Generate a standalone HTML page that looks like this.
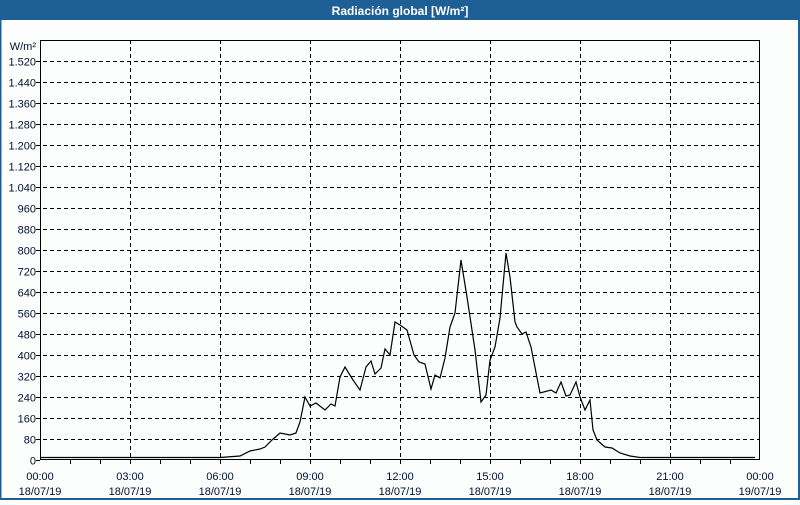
<!DOCTYPE html>
<html><head><meta charset="utf-8"><style>
html,body{margin:0;padding:0;background:#fff;}
body{width:800px;height:500px;overflow:hidden;}
</style></head><body>
<svg width="800" height="500" xmlns="http://www.w3.org/2000/svg" font-family="Liberation Sans, sans-serif">
<rect x="0" y="0" width="800" height="500" fill="#fcfdfd"/>
<rect x="0" y="0" width="800" height="20" fill="#1e5f96"/>
<rect x="0" y="0" width="1.5" height="500" fill="#1e5f96"/>
<rect x="798" y="0" width="2" height="500" fill="#1e5f96"/>
<rect x="0" y="498" width="800" height="2" fill="#1e5f96"/>
<text x="400" y="15" text-anchor="middle" fill="#fff" font-weight="bold" font-size="12">Radiación global [W/m²]</text>
<g stroke="#000" stroke-width="1" stroke-dasharray="4,3" fill="none">
<path d="M36 61.5H760M36 82.5H760M36 103.5H760M36 124.5H760M36 145.5H760M36 166.5H760M36 187.5H760M36 208.5H760M36 229.5H760M36 250.5H760M36 271.5H760M36 292.5H760M36 313.5H760M36 334.5H760M36 355.5H760M36 376.5H760M36 397.5H760M36 418.5H760M36 439.5H760"/>
<path d="M130.5 40V460M220.5 40V460M310.5 40V460M400.5 40V460M490.5 40V460M580.5 40V460M670.5 40V460"/>
</g>
<g stroke="#000" stroke-width="1" fill="none">
<rect x="40.5" y="40.5" width="719" height="419"/>
<path d="M36 460.5H40M70.5 460V464M100.5 460V464M130.5 460V464M160.5 460V464M190.5 460V464M220.5 460V464M250.5 460V464M280.5 460V464M310.5 460V464M340.5 460V464M370.5 460V464M400.5 460V464M430.5 460V464M460.5 460V464M490.5 460V464M520.5 460V464M550.5 460V464M580.5 460V464M610.5 460V464M640.5 460V464M670.5 460V464M700.5 460V464M730.5 460V464"/>
<polyline stroke-width="1.2" points="41,457.5 220,457.5 240,456 250,451 260,449 265,447 272,440 280,433 290,435 296,433 300,422 305,397 310,406 316,403 325,410 331,404 335,406 340,377 345,367 353,380 360,390 366,367 371,361 375,374 381,368 385,349 390,355 395,322 400,325 407,330 414,355 419,362 425,364 431,389 435,375 440,378 445,358 450,327 455,313 461,260 467,297 475,350 481,402 486,395 490,360 495,347 500,318 506,253 510,277 515,322 517,327 522,334 526,332 531,347 540,393 551,390 556,393 561,382 566,396 570,395 576,382 580,397 585,410 590,400 593,430 597,440 605,447 612,448 620,453 630,456 640,457.5 755,457.5"/>
</g>
<g fill="#001030" font-size="11" text-anchor="end">
<text x="36" y="50">W/m²</text>
<text x="36" y="65.5">1.520</text><text x="36" y="86.5">1.440</text><text x="36" y="107.5">1.360</text><text x="36" y="128.5">1.280</text><text x="36" y="149.5">1.200</text><text x="36" y="170.5">1.120</text><text x="36" y="191.5">1.040</text><text x="36" y="212.5">960</text><text x="36" y="233.5">880</text><text x="36" y="254.5">800</text><text x="36" y="275.5">720</text><text x="36" y="296.5">640</text><text x="36" y="317.5">560</text><text x="36" y="338.5">480</text><text x="36" y="359.5">400</text><text x="36" y="380.5">320</text><text x="36" y="401.5">240</text><text x="36" y="422.5">160</text><text x="36" y="443.5">80</text><text x="36" y="464.5">0</text>
</g>
<g fill="#001030" font-size="11" text-anchor="middle">
<text x="40" y="480">00:00</text><text x="40" y="495">18/07/19</text>
<text x="130" y="480">03:00</text><text x="130" y="495">18/07/19</text>
<text x="220" y="480">06:00</text><text x="220" y="495">18/07/19</text>
<text x="310" y="480">09:00</text><text x="310" y="495">18/07/19</text>
<text x="400" y="480">12:00</text><text x="400" y="495">18/07/19</text>
<text x="490" y="480">15:00</text><text x="490" y="495">18/07/19</text>
<text x="580" y="480">18:00</text><text x="580" y="495">18/07/19</text>
<text x="670" y="480">21:00</text><text x="670" y="495">18/07/19</text>
<text x="760" y="480">00:00</text><text x="760" y="495">19/07/19</text>
</g>
</svg>
</body></html>
